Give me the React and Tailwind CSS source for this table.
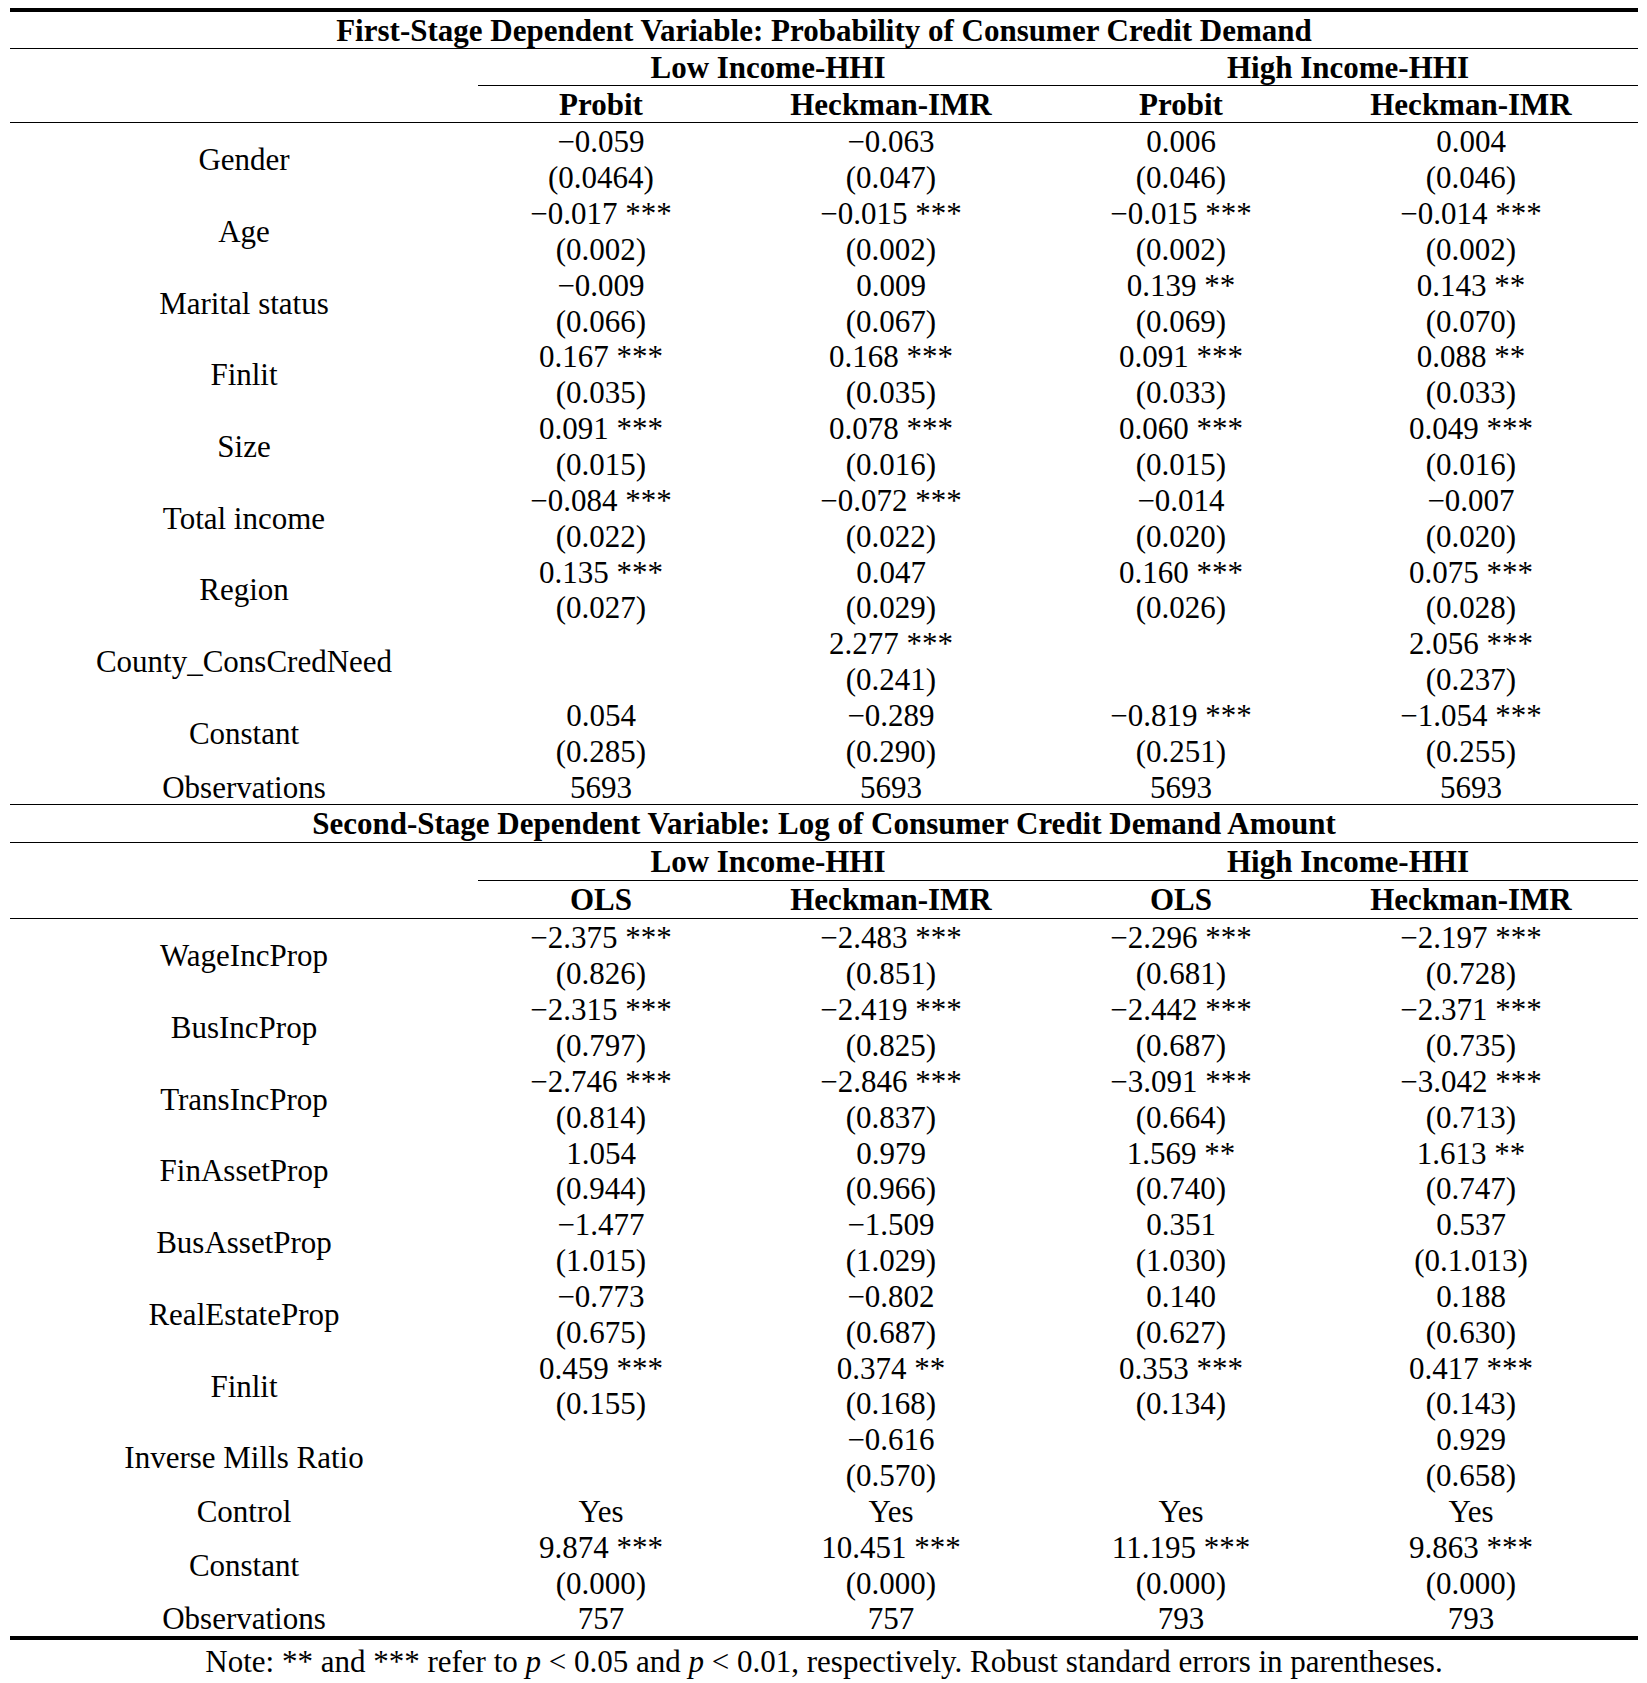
import React from "react";

const COLS = "grid grid-cols-[468px_246px_334px_246px_334px]";

const firstStage = [
  ["Gender", [["−0.059", "(0.0464)"], ["−0.063", "(0.047)"], ["0.006", "(0.046)"], ["0.004", "(0.046)"]]],
  ["Age", [["−0.017 ***", "(0.002)"], ["−0.015 ***", "(0.002)"], ["−0.015 ***", "(0.002)"], ["−0.014 ***", "(0.002)"]]],
  ["Marital status", [["−0.009", "(0.066)"], ["0.009", "(0.067)"], ["0.139 **", "(0.069)"], ["0.143 **", "(0.070)"]]],
  ["Finlit", [["0.167 ***", "(0.035)"], ["0.168 ***", "(0.035)"], ["0.091 ***", "(0.033)"], ["0.088 **", "(0.033)"]]],
  ["Size", [["0.091 ***", "(0.015)"], ["0.078 ***", "(0.016)"], ["0.060 ***", "(0.015)"], ["0.049 ***", "(0.016)"]]],
  ["Total income", [["−0.084 ***", "(0.022)"], ["−0.072 ***", "(0.022)"], ["−0.014", "(0.020)"], ["−0.007", "(0.020)"]]],
  ["Region", [["0.135 ***", "(0.027)"], ["0.047", "(0.029)"], ["0.160 ***", "(0.026)"], ["0.075 ***", "(0.028)"]]],
  ["County_ConsCredNeed", [["", ""], ["2.277 ***", "(0.241)"], ["", ""], ["2.056 ***", "(0.237)"]]],
  ["Constant", [["0.054", "(0.285)"], ["−0.289", "(0.290)"], ["−0.819 ***", "(0.251)"], ["−1.054 ***", "(0.255)"]]],
  ["Observations", ["5693", "5693", "5693", "5693"]],
];

const secondStage = [
  ["WageIncProp", [["−2.375 ***", "(0.826)"], ["−2.483 ***", "(0.851)"], ["−2.296 ***", "(0.681)"], ["−2.197 ***", "(0.728)"]]],
  ["BusIncProp", [["−2.315 ***", "(0.797)"], ["−2.419 ***", "(0.825)"], ["−2.442 ***", "(0.687)"], ["−2.371 ***", "(0.735)"]]],
  ["TransIncProp", [["−2.746 ***", "(0.814)"], ["−2.846 ***", "(0.837)"], ["−3.091 ***", "(0.664)"], ["−3.042 ***", "(0.713)"]]],
  ["FinAssetProp", [["1.054", "(0.944)"], ["0.979", "(0.966)"], ["1.569 **", "(0.740)"], ["1.613 **", "(0.747)"]]],
  ["BusAssetProp", [["−1.477", "(1.015)"], ["−1.509", "(1.029)"], ["0.351", "(1.030)"], ["0.537", "(0.1.013)"]]],
  ["RealEstateProp", [["−0.773", "(0.675)"], ["−0.802", "(0.687)"], ["0.140", "(0.627)"], ["0.188", "(0.630)"]]],
  ["Finlit", [["0.459 ***", "(0.155)"], ["0.374 **", "(0.168)"], ["0.353 ***", "(0.134)"], ["0.417 ***", "(0.143)"]]],
  ["Inverse Mills Ratio", [["", ""], ["−0.616", "(0.570)"], ["", ""], ["0.929", "(0.658)"]]],
  ["Control", ["Yes", "Yes", "Yes", "Yes"]],
  ["Constant", [["9.874 ***", "(0.000)"], ["10.451 ***", "(0.000)"], ["11.195 ***", "(0.000)"], ["9.863 ***", "(0.000)"]]],
  ["Observations", ["757", "757", "793", "793"]],
];

function Line() {
  return <div className="h-px bg-black" />;
}

function Row({ label, cells }) {
  const single = typeof cells[0] === "string";
  if (single) {
    return (
      <div className={COLS}>
        <div className="h-[35.85px] pt-[2px] flex items-center justify-center">{label}</div>
        {cells.map((c, i) => (
          <div key={i} className="h-[35.85px] pt-[2px] flex items-center justify-center">{c}</div>
        ))}
      </div>
    );
  }
  return (
    <div className={COLS}>
      <div className="h-[71.7px] pt-[2px] flex items-center justify-center">{label}</div>
      {cells.map((c, i) => (
        <div key={i} className="flex flex-col">
          <div className="h-[35.85px] pt-[2px] flex items-center justify-center whitespace-pre">{c[0]}</div>
          <div className="h-[35.85px] pt-[2px] flex items-center justify-center">{c[1]}</div>
        </div>
      ))}
    </div>
  );
}

function Section({ title, heads, rows, second }) {
  return (
    <div>
      <div className={`${second ? "h-[37px]" : "h-9"} flex items-center justify-center font-bold`}>{title}</div>
      <Line />
      <div className={COLS}>
        <div className={second ? "h-[38px]" : "h-[37px]"} />
        <div className={`col-span-2 ${second ? "h-[38px]" : "h-[37px]"} flex items-center justify-center font-bold border-b border-black`}>
          Low Income-HHI
        </div>
        <div className={`col-span-2 ${second ? "h-[38px]" : "h-[37px]"} flex items-center justify-center font-bold border-b border-black`}>
          High Income-HHI
        </div>
      </div>
      <div className={COLS}>
        <div className={second ? "h-[37px]" : "h-9"} />
        {heads.map((h, i) => (
          <div key={i} className={`${second ? "h-[37px]" : "h-9"} flex items-center justify-center font-bold`}>{h}</div>
        ))}
      </div>
      <Line />
      {rows.map(([label, cells], i) => (
        <Row key={i} label={label} cells={cells} />
      ))}
    </div>
  );
}

export default function App() {
  return (
    <div className="w-[1647px] h-[1683px] bg-white text-black pt-2 pl-[10px] font-['Liberation_Serif','Times_New_Roman',serif] text-[31px] leading-none">
      <div className="w-[1628px]">
        <div className="h-1 bg-black" />
        <Section
          title="First-Stage Dependent Variable: Probability of Consumer Credit Demand"
          heads={["Probit", "Heckman-IMR", "Probit", "Heckman-IMR"]}
          rows={firstStage}
        />
        <Line />
        <Section
          title="Second-Stage Dependent Variable: Log of Consumer Credit Demand Amount"
          heads={["OLS", "Heckman-IMR", "OLS", "Heckman-IMR"]}
          rows={secondStage}
          second
        />
        <div className="h-1 bg-black" />
        <div className="h-[44px] flex items-center justify-center">
          <span>
            Note: ** and *** refer to <i>p</i> &lt; 0.05 and <i>p</i> &lt; 0.01, respectively. Robust standard errors in parentheses.
          </span>
        </div>
      </div>
    </div>
  );
}
